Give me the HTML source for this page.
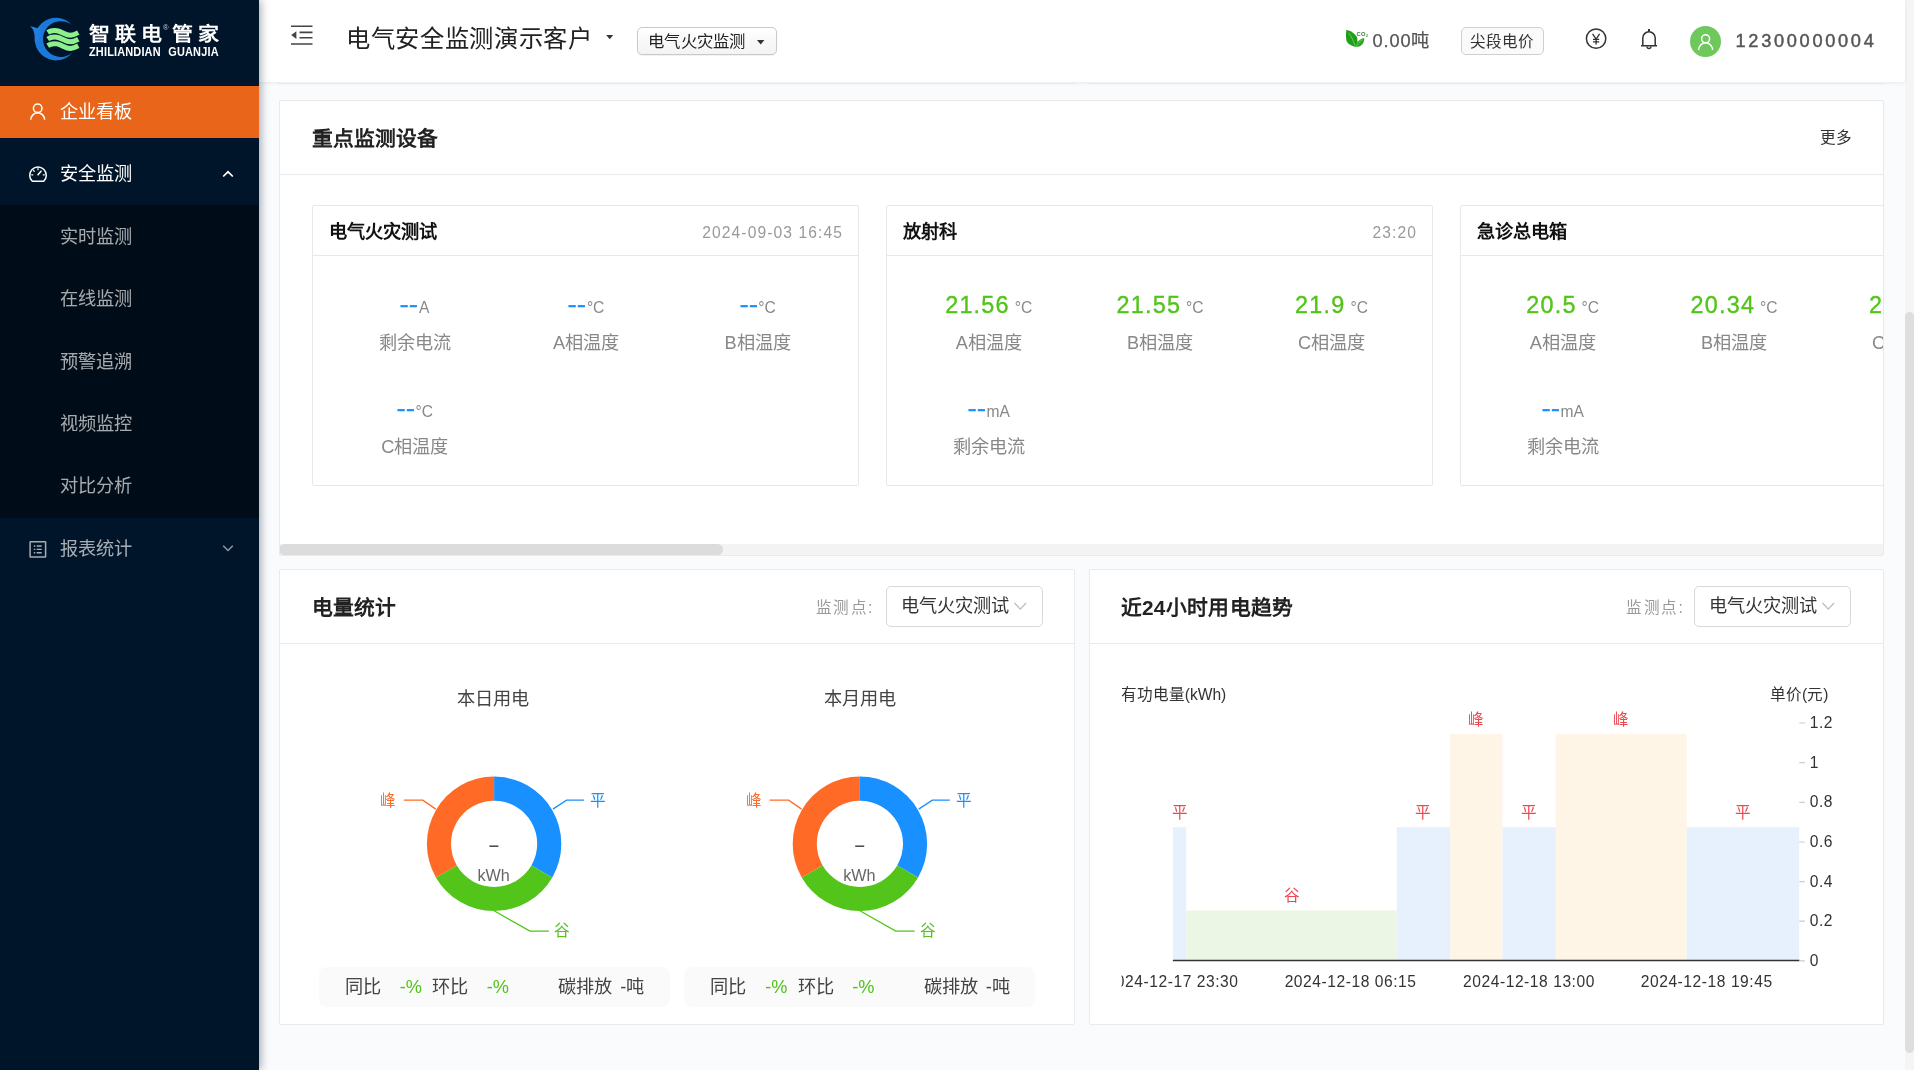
<!DOCTYPE html>
<html lang="zh-CN">
<head>
<meta charset="utf-8">
<title>智联电管家 - 企业看板</title>
<style>
*{box-sizing:border-box;margin:0;padding:0}
html,body{width:1920px;height:1070px;overflow:hidden;background:#fff}
body{font-family:"Liberation Sans",sans-serif;color:#333;position:relative;font-size:18.2px}
.abs{position:absolute}
#head,#side,#content{will-change:transform}
/* ---------- page areas ---------- */
#content{position:absolute;left:259px;top:0;width:1646px;height:1070px;background:#fafbfd;overflow:hidden}
#vtrack{position:absolute;left:1905px;top:0;width:9px;height:1070px;background:#f5f5f5}
#vthumb{position:absolute;left:1905px;top:312px;width:9px;height:741px;background:#dedede;border-radius:5px}
/* ---------- sidebar ---------- */
#side{position:absolute;left:0;top:0;width:259px;height:1070px;background:#001529;box-shadow:2px 0 8px rgba(0,21,41,.35);z-index:5}
#side .item{position:absolute;left:0;width:259px;height:52px;line-height:52px;color:#fff;font-size:18.2px;padding-left:60px;white-space:nowrap}
#side .item.active{background:#e8651a}
#side .sub{position:absolute;left:0;top:205px;width:259px;height:313px;background:#000c17}
#side .sub .item{color:rgba(255,255,255,.65)}
#side svg{position:absolute}
/* ---------- header ---------- */
#head{position:absolute;left:259px;top:0;width:1646px;height:82px;background:#fff;box-shadow:0 1px 4px rgba(0,21,41,.08);z-index:3}
/* ---------- cards ---------- */
.card{position:absolute;background:#fff;border:1px solid #e9eaec;border-radius:2px}
.card .chead{position:absolute;left:0;top:0;right:0;height:74px;border-bottom:1px solid #e9eaec}
.ctitle{position:absolute;left:32px;top:1px;line-height:74px;font-size:20.8px;font-weight:bold;color:#222;white-space:nowrap}

/* inner device cards */
.dev{position:absolute;top:104px;width:547px;height:281px;border:1px solid #e8e8e8;border-radius:2px;background:#fff}
.dev .dh{position:absolute;left:0;right:0;top:0;height:50px;border-bottom:1px solid #e8e8e8}
.dev .dn{position:absolute;left:16px;top:1.5px;line-height:49px;font-size:18.2px;font-weight:bold;color:#111;white-space:nowrap}
.dev .dt{position:absolute;right:15px;top:2px;line-height:49px;font-size:15.6px;color:#999;letter-spacing:1.1px;white-space:nowrap}
.cell{position:absolute;width:171.4px;height:104px;text-align:center;white-space:nowrap}
.cell .v{position:absolute;left:0;right:0;top:17px;line-height:32px;font-size:15.6px;color:#888}
.cell .v b{font-weight:normal;font-size:23.4px;color:#52c41a;letter-spacing:1.2px;margin-right:5px;-webkit-text-stroke:.35px #52c41a}
.cell .v i{font-style:normal;font-size:23.4px;color:#1890ff;display:inline-block;transform:scaleX(1.2);margin:0 2px 0 1.5px;position:relative;top:-.9px;-webkit-text-stroke:.3px #1890ff}
.cell .l{position:absolute;left:0;right:0;top:56.5px;line-height:28px;font-size:18.2px;color:#888}
.c1{left:16px}.c2{left:187.4px}.c3{left:358.8px}
.r1{top:66px}.r2{top:170px}

/* bottom cards */
.flabel{position:absolute;top:1px;line-height:74px;font-size:15.6px;color:#999;letter-spacing:1.5px;white-space:nowrap}
.sel{position:absolute;top:16px;width:157px;height:41px;border:1px solid #d9d9d9;border-radius:5px;background:#fff;font-size:18.2px;line-height:39px;padding-left:14.5px;color:#333;white-space:nowrap}
.pie{position:absolute;top:76px;width:366px;height:380px}
.pie .pt{position:absolute;left:0;right:0;top:39px;line-height:28px;text-align:center;font-size:18.2px;color:#444}
.stat{position:absolute;left:7px;top:321px;width:351px;height:40px;border-radius:8px;background:#fafafa;font-size:18.2px;line-height:40px;color:#444;white-space:nowrap}
.stat span{position:absolute;top:0}
.stat .g{color:#52c41a}
</style>
</head>
<body>

<div id="content">
  <!-- peek of previous row under header -->
  <div class="abs" style="left:20px;top:60px;width:796px;height:24px;background:#fdfdfe;border:1px solid #eff0f2"></div>
  <div class="abs" style="left:830px;top:60px;width:795px;height:24px;background:#fdfdfe;border:1px solid #eff0f2"></div>

  <section class="card" id="c1" style="left:20px;top:100px;width:1605px;height:456px;overflow:hidden">
    <div class="chead"><div class="ctitle">重点监测设备</div>
      <div class="abs" style="right:31px;top:0;line-height:74px;font-size:15.6px;color:#333">更多</div></div>

    <div class="dev" style="left:32px">
      <div class="dh"><span class="dn">电气火灾测试</span><span class="dt">2024-09-03 16:45</span></div>
      <div class="cell c1 r1"><div class="v"><i>--</i>A</div><div class="l">剩余电流</div></div>
      <div class="cell c2 r1"><div class="v"><i>--</i>°C</div><div class="l">A相温度</div></div>
      <div class="cell c3 r1"><div class="v"><i>--</i>°C</div><div class="l">B相温度</div></div>
      <div class="cell c1 r2"><div class="v"><i>--</i>°C</div><div class="l">C相温度</div></div>
    </div>

    <div class="dev" style="left:606px">
      <div class="dh"><span class="dn">放射科</span><span class="dt">23:20</span></div>
      <div class="cell c1 r1"><div class="v"><b>21.56</b>°C</div><div class="l">A相温度</div></div>
      <div class="cell c2 r1"><div class="v"><b>21.55</b>°C</div><div class="l">B相温度</div></div>
      <div class="cell c3 r1"><div class="v"><b>21.9</b>°C</div><div class="l">C相温度</div></div>
      <div class="cell c1 r2"><div class="v"><i>--</i>mA</div><div class="l">剩余电流</div></div>
    </div>

    <div class="dev" style="left:1180px">
      <div class="dh"><span class="dn">急诊总电箱</span><span class="dt">23:20</span></div>
      <div class="cell c1 r1"><div class="v"><b>20.5</b>°C</div><div class="l">A相温度</div></div>
      <div class="cell c2 r1"><div class="v"><b>20.34</b>°C</div><div class="l">B相温度</div></div>
      <div class="cell c3 r1"><div class="v"><b>20.4</b>°C</div><div class="l">C相温度</div></div>
      <div class="cell c1 r2"><div class="v"><i>--</i>mA</div><div class="l">剩余电流</div></div>
    </div>

    <!-- horizontal scrollbar -->
    <div class="abs" style="left:0;right:0;bottom:0;height:11px;background:#f3f3f3"></div>
    <div class="abs" style="left:-1px;bottom:0;width:444px;height:11px;background:#dcdcdc;border-radius:5.5px"></div>
  </section>

  <section class="card" id="c2" style="left:20px;top:569px;width:796px;height:456px">
    <div class="chead"><div class="ctitle">电量统计</div>
      <div class="flabel" style="left:535.5px">监测点:</div>
      <div class="sel" style="left:605.6px">电气火灾测试<svg class="abs" style="left:126px;top:13px" width="15" height="12" viewBox="0 0 15 12" fill="none" stroke="#bbb" stroke-width="1.2"><path d="M1.5 3 L7.3 9.2 L13.1 3"/></svg></div></div>
    <div class="pie" style="left:31.7px"><div class="pt" style="left:-3px">本日用电</div>
    <svg class="abs" style="left:0;top:0" width="366" height="320" viewBox="0 0 366 320"><g transform="translate(-.8 -2.2)">
      <path d="M182.9 132.8 A67.2 67.2 0 0 1 241.1 233.6 L220.2 221.6 A43.1 43.1 0 0 0 182.9 156.9 Z" fill="#1890ff"/>
      <path d="M241.1 233.6 A67.2 67.2 0 0 1 124.7 233.6 L145.6 221.6 A43.1 43.1 0 0 0 220.2 221.6 Z" fill="#52c41a"/>
      <path d="M124.7 233.6 A67.2 67.2 0 0 1 182.9 132.8 L182.9 156.9 A43.1 43.1 0 0 0 145.6 221.6 Z" fill="#ff6b26"/>
      <g fill="none" stroke-width="1.3">
        <path d="M124.6 165.3 L111.6 156.3 H92.6" stroke="#ff6b26"/>
        <path d="M241.7 165.3 L255.3 156.3 H272.8" stroke="#1890ff"/>
        <path d="M182.9 267.0 L218.7 287.3 H237.6" stroke="#52c41a"/>
      </g>
      <g font-family="Liberation Sans, sans-serif" font-size="15.6">
        <text x="85.1" y="162.5" text-anchor="end" fill="#ff6b26">峰</text>
        <text x="278.9" y="162.5" fill="#1890ff">平</text>
        <text x="243.1" y="292.7" fill="#52c41a">谷</text>
        <path d="M178.2 202.4h9" stroke="#444" stroke-width="1.5"/>
        <text x="182.4" y="237.2" text-anchor="middle" fill="#666" font-size="16.2">kWh</text>
      </g>
    </g></svg>
    <div class="stat"><span style="left:26px">同比</span><span class="g" style="left:81px">-%</span><span style="left:113.5px">环比</span><span class="g" style="left:168px">-%</span><span style="left:239.5px;word-spacing:3px">碳排放 -吨</span></div></div>
    <div class="pie" style="left:397.2px"><div class="pt">本月用电</div>
    <svg class="abs" style="left:0;top:0" width="366" height="320" viewBox="0 0 366 320"><g transform="translate(0 -2.2)">
      <path d="M182.9 132.8 A67.2 67.2 0 0 1 241.1 233.6 L220.2 221.6 A43.1 43.1 0 0 0 182.9 156.9 Z" fill="#1890ff"/>
      <path d="M241.1 233.6 A67.2 67.2 0 0 1 124.7 233.6 L145.6 221.6 A43.1 43.1 0 0 0 220.2 221.6 Z" fill="#52c41a"/>
      <path d="M124.7 233.6 A67.2 67.2 0 0 1 182.9 132.8 L182.9 156.9 A43.1 43.1 0 0 0 145.6 221.6 Z" fill="#ff6b26"/>
      <g fill="none" stroke-width="1.3">
        <path d="M124.6 165.3 L111.6 156.3 H92.6" stroke="#ff6b26"/>
        <path d="M241.7 165.3 L255.3 156.3 H272.8" stroke="#1890ff"/>
        <path d="M182.9 267.0 L218.7 287.3 H237.6" stroke="#52c41a"/>
      </g>
      <g font-family="Liberation Sans, sans-serif" font-size="15.6">
        <text x="85.1" y="162.5" text-anchor="end" fill="#ff6b26">峰</text>
        <text x="278.9" y="162.5" fill="#1890ff">平</text>
        <text x="243.1" y="292.7" fill="#52c41a">谷</text>
        <path d="M178.2 202.4h9" stroke="#444" stroke-width="1.5"/>
        <text x="182.4" y="237.2" text-anchor="middle" fill="#666" font-size="16.2">kWh</text>
      </g>
    </g></svg>
    <div class="stat"><span style="left:26px">同比</span><span class="g" style="left:81px">-%</span><span style="left:113.5px">环比</span><span class="g" style="left:168px">-%</span><span style="left:239.5px;word-spacing:3px">碳排放 -吨</span></div></div>
  </section>

  <section class="card" id="c3" style="left:830px;top:569px;width:795px;height:456px">
    <div class="chead"><div class="ctitle" style="left:30.7px;letter-spacing:.3px">近24小时用电趋势</div>
      <div class="flabel" style="left:536px">监测点:</div>
      <div class="sel" style="left:603.8px">电气火灾测试<svg class="abs" style="left:126px;top:13px" width="15" height="12" viewBox="0 0 15 12" fill="none" stroke="#bbb" stroke-width="1.2"><path d="M1.5 3 L7.3 9.2 L13.1 3"/></svg></div></div>
    <svg class="abs" style="left:0;top:0" width="792" height="453" viewBox="0 0 792 453" font-family="Liberation Sans, sans-serif" font-size="15.6"><g transform="translate(.5 1)">
      <text x="30.2" y="129.4" fill="#333" >有功电量(kWh)</text>
      <text x="738.0" y="129.4" fill="#333" text-anchor="end">单价(元)</text>
      <rect x="82.4" y="256.2" width="13.3" height="133.7" fill="#e6f1fd"/><rect x="95.8" y="339.5" width="210.5" height="50.4" fill="#ebf7e4"/><rect x="306.2" y="256.2" width="53.3" height="133.7" fill="#e6f1fd"/><rect x="359.5" y="162.8" width="52.5" height="227.1" fill="#fef5e7"/><rect x="412.0" y="256.2" width="53.3" height="133.7" fill="#e6f1fd"/><rect x="465.3" y="162.8" width="130.9" height="227.1" fill="#fef5e7"/><rect x="596.2" y="256.2" width="112.5" height="133.7" fill="#e6f1fd"/>
      <g fill="#ec4a52"><text x="89.1" y="247.0" text-anchor="middle">平</text><text x="201.0" y="330.3" text-anchor="middle">谷</text><text x="332.8" y="247.0" text-anchor="middle">平</text><text x="385.8" y="153.6" text-anchor="middle">峰</text><text x="438.7" y="247.0" text-anchor="middle">平</text><text x="530.8" y="153.6" text-anchor="middle">峰</text><text x="652.5" y="247.0" text-anchor="middle">平</text></g>
      <path d="M82.4 389.5H709.0" stroke="#333" stroke-width="1.5"/>
      <path d="M708.8 389.9h5.5M708.8 350.2h5.5M708.8 310.6h5.5M708.8 271.0h5.5M708.8 231.3h5.5M708.8 191.6h5.5M708.8 152.0h6" stroke="#ccc" stroke-width="1.2" fill="none"/>
      <g fill="#333" letter-spacing=".5" transform="translate(0 -.4)"><text x="719.3" y="395.5">0</text><text x="719.3" y="355.9">0.2</text><text x="719.3" y="316.2">0.4</text><text x="719.3" y="276.6">0.6</text><text x="719.3" y="236.9">0.8</text><text x="719.3" y="197.2">1</text><text x="719.3" y="157.6">1.2</text></g>
      <svg x="31" y="80" width="730" height="360" viewBox="31 80 730 360" overflow="hidden"><g fill="#333" letter-spacing=".55"><text x="82.1" y="416.4" text-anchor="middle">2024-12-17 23:30</text><text x="260.1" y="416.4" text-anchor="middle">2024-12-18 06:15</text><text x="438.5" y="416.4" text-anchor="middle">2024-12-18 13:00</text><text x="616.2" y="416.4" text-anchor="middle">2024-12-18 19:45</text></g></svg>
    </g></svg>
  </section>

</div>

<header id="head">
  <!-- menu fold icon -->
  <svg class="abs" style="left:31px;top:24px" width="24" height="22" viewBox="0 0 24 22" fill="none" stroke="#444" stroke-width="1.6"><path d="M1 2.2h21.5M9.5 8.4h13M9.5 13.8h13M1 20h21.5"/><path d="M1.2 11.1 L6.4 7.3 V14.9 Z" fill="#444" stroke="none"/></svg>
  <div class="abs" style="left:87px;top:19px;line-height:40px;font-size:24.3px;letter-spacing:.65px;color:#222;white-space:nowrap">电气安全监测演示客户</div>
  <svg class="abs" style="left:346px;top:34px" width="10" height="7" viewBox="0 0 10 7"><path d="M1.2 1 H8.2 L4.7 5.2 Z" fill="#333"/></svg>
  <div class="abs" style="left:378px;top:27px;width:140px;height:28px;border:1px solid #c9c9c9;border-radius:5px;background:linear-gradient(#fff,#f3f3f3);box-shadow:0 1px 1px rgba(0,0,0,.06);font-size:16.4px;letter-spacing:.3px;line-height:27px;padding-left:10px;color:#222;white-space:nowrap">电气火灾监测
    <svg class="abs" style="left:118px;top:11px" width="10" height="7" viewBox="0 0 10 7"><path d="M1 1 H8.4 L4.7 5.4 Z" fill="#333"/></svg>
  </div>

  <!-- CO2 leaf -->
  <svg class="abs" style="left:1086px;top:29px" width="24" height="20" viewBox="0 0 24 20">
    <path d="M1.3 1 C5.5 1.2 9.5 4.5 11.8 7.8 C13 10.5 12.6 15 10.7 17.8 C6 16.8 1.5 14 1.3 10.7 C0.8 7.5 1 4 1.3 1 Z" fill="#1f9e18"/>
    <path d="M19.1 9.1 C19.6 12.5 17.8 16 14.9 17.3 C13 17.9 11.4 17.9 10.5 17.6 C10.5 14 14.5 10.2 19.1 9.1 Z" fill="#2aa822"/>
    <path d="M3.5 3.8 C6 6.5 8 11 10 16.5 M11.5 16.5 C13 14 15 12 17.5 10.8" stroke="#7fe07a" stroke-width=".7" fill="none"/>
    <text x="11.6" y="7.4" font-family="Liberation Sans, sans-serif" font-size="5.8" font-weight="bold" fill="#3c7f3a" letter-spacing=".2">CO</text><text x="21" y="8" font-family="Liberation Sans, sans-serif" font-size="3.4" font-weight="bold" fill="#3c7f3a">2</text>
  </svg>
  <div class="abs" style="left:1113.5px;top:26.5px;line-height:28px;font-size:18.2px;color:#555;white-space:nowrap;letter-spacing:.9px;-webkit-text-stroke:.25px #555">0.00吨</div>
  <div class="abs" style="left:1202px;top:27px;width:82.5px;height:28px;border:1px solid #cfcfcf;border-radius:5px;background:#fafafa;font-size:15.6px;line-height:27px;text-align:center;color:#333;white-space:nowrap">尖段电价</div>

  <!-- yen -->
  <svg class="abs" style="left:1325px;top:27px" width="24" height="24" viewBox="0 0 24 24" fill="none" stroke="#333"><circle cx="12.1" cy="11.6" r="9.7" stroke-width="1.5"/><path d="M8.6 6.8 L12.1 12 L15.6 6.8 M12.1 12 V17.4 M9 12.3 H15.2 M9 14.9 H15.2" stroke-width="1.3"/></svg>
  <!-- bell -->
  <svg class="abs" style="left:1380px;top:27px" width="20" height="24" viewBox="0 0 20 24" fill="none" stroke="#333" stroke-width="1.5"><path d="M2 18.8 H18 M3.8 18.8 V11 A6.2 6.2 0 0 1 16.2 11 V18.8"/><path d="M8 19.5 a2 2 0 0 0 4 0" stroke-width="1.3"/><path d="M10 2 V4.6" stroke-width="2"/></svg>
  <!-- avatar -->
  <div class="abs" style="left:1431px;top:26px;width:31px;height:31px;border-radius:50%;background:#6ec85c"></div>
  <svg class="abs" style="left:1438px;top:33px" width="18" height="18" viewBox="0 0 18 18" fill="none" stroke="#fff" stroke-width="1.5"><circle cx="8.6" cy="5.8" r="4"/><path d="M1.6 17 A7 7.2 0 0 1 15.6 17"/></svg>
  <div class="abs" style="left:1476.5px;top:26px;line-height:30px;font-size:18.2px;color:#555;letter-spacing:2.7px;-webkit-text-stroke:.45px #555;white-space:nowrap">12300000004</div>
</header>

<nav id="side">
  <!-- logo -->
  <svg style="left:0;top:0" width="259" height="80" viewBox="0 0 259 80">
    <path d="M72.3 25.4 A21.3 21.3 0 1 0 72.3 52.8 A17.85 17.85 0 1 1 72.3 25.4 Z" fill="#1b7ad9"/>
    <path d="M30.1 26.3 C32.8 26.3 35.6 28.5 38.3 27.7 L41 25.4 L39 40 L34.8 41.5 C34.9 36 34.6 29.6 30.1 26.3 Z" fill="#1f80e2"/>
    <g fill="none" stroke="#8df08d" stroke-width="5">
      <path d="M47.7 32.4 C50.5 30.6 53.5 30.1 57 30.7 C62 31.6 65.5 35.3 70.5 35.2 C73.5 35.1 76 33.8 78.3 32.6"/>
      <path d="M47.7 39.0 C50.5 37.2 53.5 36.7 57 37.3 C62 38.2 65.5 41.9 70.5 41.8 C73.5 41.7 76 40.4 78.3 39.2"/>
      <path d="M47.7 45.6 C50.5 43.8 53.5 43.3 57 43.9 C62 44.8 65.5 48.5 70.5 48.4 C73.5 48.3 76 47.0 78.3 45.8"/>
    </g>
  </svg>
  <div class="abs" style="left:88.5px;top:18.5px;font-size:19.6px;font-weight:bold;color:#fff;letter-spacing:4.2px;line-height:30px;white-space:nowrap;transform:scaleX(1.07);transform-origin:0 0">智联电<span style="font-size:7px;font-weight:normal;letter-spacing:0;position:relative;top:-11px;margin-left:-3.5px;margin-right:3.6px;color:#ccd">®</span>管家</div>
  <div class="abs" style="left:88.5px;top:45px;font-size:12.6px;font-weight:bold;color:#fff;letter-spacing:0.2px;word-spacing:5px;line-height:14px;white-space:nowrap;transform:scaleX(.868);transform-origin:0 0">ZHILIANDIAN GUANJIA</div>

  <div class="item active" style="top:86px">企业看板</div>
  <svg style="left:29px;top:102px" width="18" height="19" viewBox="0 0 18 19" fill="none" stroke="#fff" stroke-width="1.5"><circle cx="8.7" cy="6.3" r="4.3"/><path d="M1.8 17.8 A6.9 7 0 0 1 15.6 17.8"/></svg>

  <div class="item" style="top:148.4px">安全监测</div>
  <svg style="left:28px;top:165px" width="20" height="18" viewBox="0 0 20 18" fill="none" stroke="#fff" stroke-width="1.5" stroke-linecap="round"><path d="M4.3 16.3 A8.3 8.3 0 1 1 15.7 16.3 Z" stroke-linejoin="round"/><path d="M10 9.8 L13 6.2"/><path d="M10 3.6v1.1M5.5 5.5l.8.8M3.7 9.8h1.1M16.3 9.8h-1.1" stroke-width="1.2"/></svg>
  <svg style="left:222px;top:169px" width="12" height="10" viewBox="0 0 12 10" fill="none" stroke="#fff" stroke-width="1.7"><path d="M1.2 7.5 L6 2.8 L10.8 7.5"/></svg>

  <div class="sub">
    <div class="item" style="top:5.8px">实时监测</div>
    <div class="item" style="top:68.2px">在线监测</div>
    <div class="item" style="top:130.6px">预警追溯</div>
    <div class="item" style="top:193px">视频监控</div>
    <div class="item" style="top:255.4px">对比分析</div>
  </div>

  <div class="item" style="top:522.8px;color:rgba(255,255,255,.65)">报表统计</div>
  <svg style="left:28px;top:540px" width="20" height="19" viewBox="0 0 20 19" fill="none" stroke="rgba(255,255,255,.65)" stroke-width="1.5"><rect x="2.1" y="1.7" width="15.5" height="15.3" rx=".5"/><path d="M8.7 6h5M8.7 9.4h5M8.7 12.8h5" stroke-width="1.4"/><path d="M5.8 6h1.5M5.8 9.4h1.5M5.8 12.8h1.5" stroke-width="1.4"/></svg>
  <svg style="left:222px;top:543px" width="12" height="10" viewBox="0 0 12 10" fill="none" stroke="rgba(255,255,255,.55)" stroke-width="1.6"><path d="M1.2 2.8 L6 7.5 L10.8 2.8"/></svg>
</nav>

<div id="vtrack"></div>
<div id="vthumb"></div>

</body>
</html>
